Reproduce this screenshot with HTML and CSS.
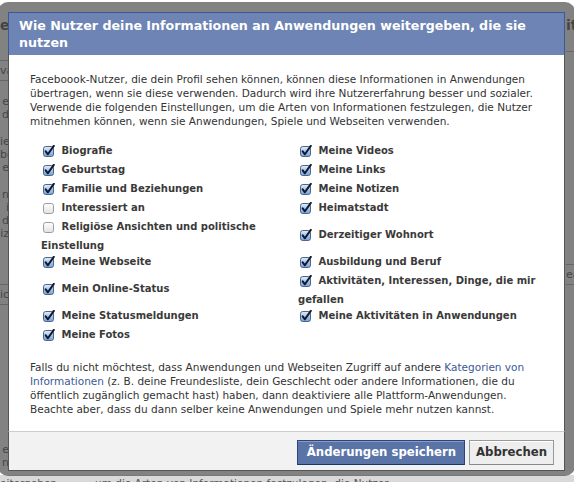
FILE: index.html
```html
<!DOCTYPE html>
<html lang="de">
<head>
<meta charset="utf-8">
<title>Wie Nutzer deine Informationen an Anwendungen weitergeben</title>
<link rel="stylesheet" href="styles.css">
</head>
<body>
<svg class="defs" width="0" height="0" aria-hidden="true">
  <defs>
    <linearGradient id="gOn" x1="0" y1="0" x2="0" y2="1">
      <stop offset="0" stop-color="#e4eefb"/>
      <stop offset="0.45" stop-color="#a9c9f0"/>
      <stop offset="1" stop-color="#6ea3e2"/>
    </linearGradient>
    <linearGradient id="gOff" x1="0" y1="0" x2="0" y2="1">
      <stop offset="0" stop-color="#ffffff"/>
      <stop offset="1" stop-color="#e2e2e2"/>
    </linearGradient>
    <symbol id="cbOn" viewBox="0 0 12 12">
      <rect x="0.5" y="1.5" width="10" height="10" rx="2.2" fill="url(#gOn)" stroke="#4f6383"/>
      <path d="M2.7 6.4 L4.9 9.3 L10.8 0.9" fill="none" stroke="#14182a" stroke-width="2" stroke-linecap="round" stroke-linejoin="round"/>
    </symbol>
    <symbol id="cbOff" viewBox="0 0 12 12">
      <rect x="0.5" y="1.5" width="10" height="10" rx="2.2" fill="url(#gOff)" stroke="#9c9c9c"/>
    </symbol>
  </defs>
</svg>

<div class="page">
  <div class="bg">
    <div class="bg-left">
      <div class="bg-head">e</div>
      <div class="bg-box">va</div>
      <div class="bg-text">e<br>d</div>
      <div class="bg-text">ie<br>be<br>e</div>
      <div class="bg-text">n<br>i<br>d<br>iz</div>
      <div class="bg-box bg-box-low">ic</div>
      <div class="bg-text bg-text-low">e<br>n</div>
    </div>
    <div class="bg-right">
      <div class="bg-head">it</div>
      <div class="bg-rule"></div>
      <div class="bg-box bg-box-right">ea</div>
    </div>
  </div>
  <div class="bg-bottom">
    <span class="bg-frag">eitergeben</span>
    <span class="bg-line">um die Arten von Informationen festzulegen, die Nutzer</span>
  </div>

  <div class="modal">
    <div class="dialog">
      <h2 class="dialog-title">Wie Nutzer deine Informationen an Anwendungen weitergeben, die sie<br>nutzen</h2>
      <div class="dialog-body">
        <p class="intro">Faceboook-Nutzer, die dein Profil sehen können, können diese Informationen in Anwendungen<br>übertragen, wenn sie diese verwenden. Dadurch wird ihre Nutzererfahrung besser und sozialer.<br>Verwende die folgenden Einstellungen, um die Arten von Informationen festzulegen, die Nutzer<br>mitnehmen können, wenn sie Anwendungen, Spiele und Webseiten verwenden.</p>

        <div class="perm-grid">
          <label class="perm"><svg class="cb"><use href="#cbOn"/></svg>Biografie</label>
          <label class="perm"><svg class="cb"><use href="#cbOn"/></svg>Meine Videos</label>

          <label class="perm"><svg class="cb"><use href="#cbOn"/></svg>Geburtstag</label>
          <label class="perm"><svg class="cb"><use href="#cbOn"/></svg>Meine Links</label>

          <label class="perm"><svg class="cb"><use href="#cbOn"/></svg>Familie und Beziehungen</label>
          <label class="perm"><svg class="cb"><use href="#cbOn"/></svg>Meine Notizen</label>

          <label class="perm"><svg class="cb"><use href="#cbOff"/></svg>Interessiert an</label>
          <label class="perm"><svg class="cb"><use href="#cbOn"/></svg>Heimatstadt</label>

          <label class="perm wrap"><svg class="cb"><use href="#cbOff"/></svg>Religiöse Ansichten und politische<br>Einstellung</label>
          <label class="perm"><svg class="cb"><use href="#cbOn"/></svg>Derzeitiger Wohnort</label>

          <label class="perm"><svg class="cb"><use href="#cbOn"/></svg>Meine Webseite</label>
          <label class="perm"><svg class="cb"><use href="#cbOn"/></svg>Ausbildung und Beruf</label>

          <label class="perm"><svg class="cb"><use href="#cbOn"/></svg>Mein Online-Status</label>
          <label class="perm wrap"><svg class="cb"><use href="#cbOn"/></svg>Aktivitäten, Interessen, Dinge, die mir<br>gefallen</label>

          <label class="perm"><svg class="cb"><use href="#cbOn"/></svg>Meine Statusmeldungen</label>
          <label class="perm"><svg class="cb"><use href="#cbOn"/></svg>Meine Aktivitäten in Anwendungen</label>

          <label class="perm"><svg class="cb"><use href="#cbOn"/></svg>Meine Fotos</label>
        </div>

        <p class="outro">Falls du nicht möchtest, dass Anwendungen und Webseiten Zugriff auf andere <a class="link" href="#">Kategorien von<br>Informationen</a> (z. B. deine Freundesliste, dein Geschlecht oder andere Informationen, die du<br>öffentlich zugänglich gemacht hast) haben, dann deaktiviere alle Plattform-Anwendungen.<br>Beachte aber, dass du dann selber keine Anwendungen und Spiele mehr nutzen kannst.</p>
      </div>
      <div class="dialog-footer">
        <button class="btn btn-confirm" type="button">Änderungen speichern</button>
        <button class="btn btn-cancel" type="button">Abbrechen</button>
      </div>
    </div>
  </div>
</div>
</body>
</html>
```

FILE: styles.css
```css
* { box-sizing: border-box; }

html, body {
  margin: 0;
  padding: 0;
  background: #fff;
}

body {
  font-family: "DejaVu Sans", "Liberation Sans", sans-serif;
  color: #333;
}

.defs {
  position: absolute;
  width: 0;
  height: 0;
  overflow: hidden;
}

.page {
  position: relative;
  width: 574px;
  height: 482px;
  overflow: hidden;
  background: #fff;
}

/* ---------- page behind the dialog ---------- */
.bg {
  display: flex;
  justify-content: space-between;
  height: 475px;
}

.bg-left,
.bg-right {
  width: 9px;
  overflow: hidden;
  white-space: nowrap;
  font-size: 11px;
  line-height: 13px;
  color: #222;
  padding-top: 18px;
}

.bg-left { text-align: right; }
.bg-right { width: 8px; }

.bg-head {
  font-weight: bold;
  font-size: 14px;
  line-height: 14px;
}

.bg-box {
  margin-top: 28px;
  border-top: 1px solid #999;
  border-bottom: 1px solid #999;
  line-height: 19px;
}

.bg-box-low { margin-top: 44px; }
.bg-box-right { margin-top: 212px; }

.bg-rule {
  margin-top: 19px;
  border-top: 1px solid #999;
}

.bg-text { margin-top: 14px; }
.bg-text-low { margin-top: 138px; }

.bg-bottom {
  display: flex;
  height: 7px;
  overflow: hidden;
  background: #d9d9d9;
  color: #555;
  font-size: 10.5px;
  line-height: 14px;
  white-space: nowrap;
  padding-top: 1px;
}

.bg-frag {
  flex: 0 0 auto;
  width: 95px;
  overflow: hidden;
}

.bg-line { flex: 0 0 auto; }

/* ---------- dialog ---------- */
.modal {
  position: absolute;
  left: -2px;
  top: 2px;
  padding: 10px 10px 5px;
  background: rgba(82, 82, 82, 0.72);
  border-radius: 10px;
}

.dialog {
  width: 557px;
}

.dialog-title {
  margin: 0;
  background: #6d84b4;
  border: 1px solid #3b5998;
  border-bottom: 0;
  color: #fff;
  font-size: 12.65px;
  font-weight: bold;
  line-height: 17px;
  padding: 4px 10px 4px;
  white-space: nowrap;
}

.dialog-body {
  background: #fff;
  border-left: 1px solid #555;
  border-right: 1px solid #555;
  padding: 17px 10px 15px 21px;
}

.intro,
.outro {
  margin: 0;
  font-size: 10.5px;
  line-height: 14px;
  color: #333;
  white-space: nowrap;
}

.outro { margin-top: 16px; }

.link {
  color: #3b5998;
  text-decoration: none;
}

.perm-grid {
  display: grid;
  grid-template-columns: 257px 257px;
  grid-template-rows: 19px 19px 19px 19px 35px 19px 35px 19px 19px;
  align-items: center;
  margin: 13px 0 0 11px;
}

.perm {
  display: block;
  font-size: 10px;
  font-weight: bold;
  line-height: 19px;
  color: #3a3a3a;
  white-space: nowrap;
}

.perm.wrap { align-self: start; }

.cb {
  width: 12px;
  height: 12px;
  margin: 0 6.5px 0 2px;
  vertical-align: -2.5px;
}

.dialog-footer {
  display: flex;
  justify-content: flex-end;
  gap: 4px;
  background: #f2f2f2;
  border: 1px solid #555;
  border-top: 1px solid #ccc;
  padding: 8px 10px 5px;
}

.btn {
  height: 25px;
  margin: 0;
  font-family: "DejaVu Sans", "Liberation Sans", sans-serif;
  font-size: 11.7px;
  font-weight: bold;
  line-height: 21px;
  border: 1px solid;
  border-radius: 0;
  cursor: pointer;
}

.btn-confirm {
  padding: 0 8px 0 9px;
  color: #fff;
  background: #5b74a8;
  border-color: #29447e #29447e #1a356e;
  box-shadow: inset 0 1px 0 #8a9cc2;
}

.btn-cancel {
  padding: 0 6px;
  color: #333;
  background: #eeeeee;
  border-color: #999 #999 #888;
  box-shadow: inset 0 1px 0 #fff;
}
```
